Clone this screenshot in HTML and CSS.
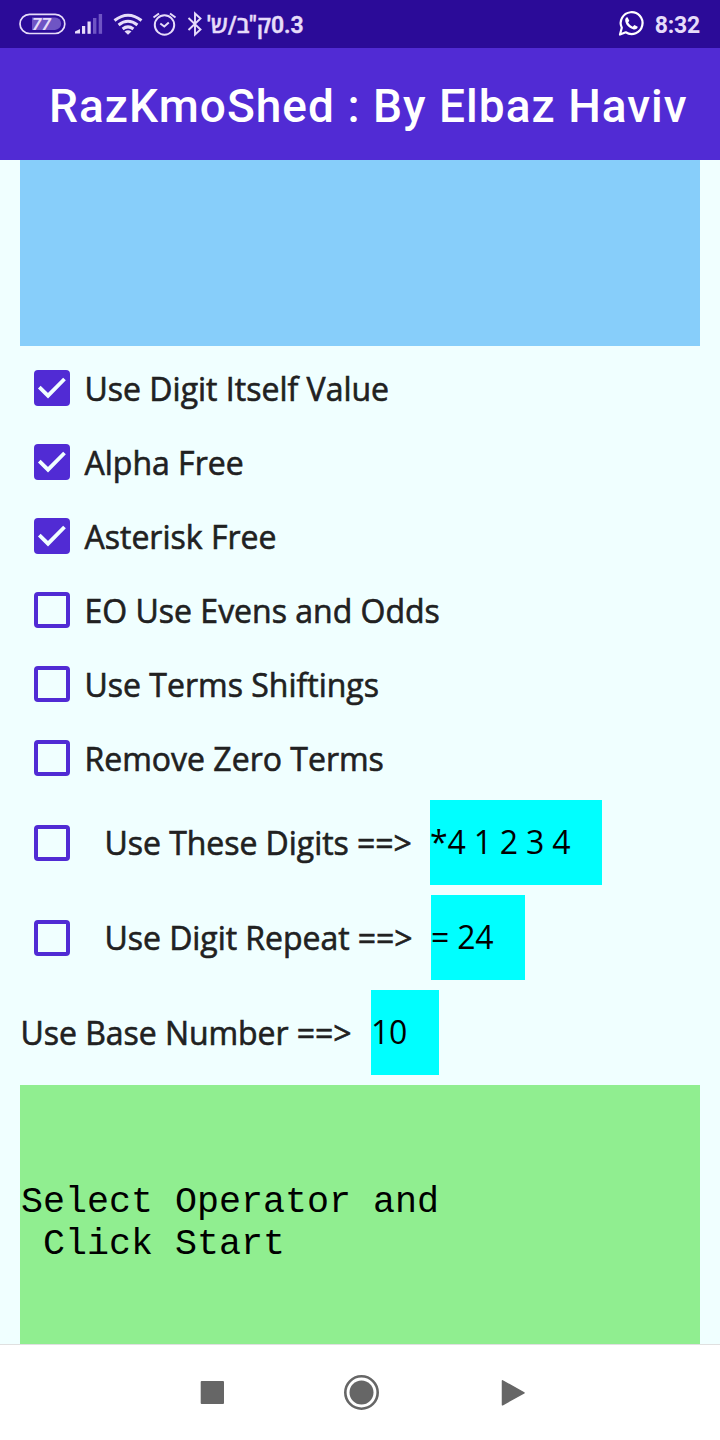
FILE: index.html
```html
<!DOCTYPE html>
<html lang="en">
<head>
<meta charset="utf-8">
<title>RazKmoShed</title>
<link rel="stylesheet" href="styles.css">
</head>
<body>
<div class="screen">
  <div class="status">
    <svg class="status-icons" width="207" height="48" viewBox="0 0 207 48" fill="none">
      <rect x="20" y="14.300" width="44.800" height="19.200" rx="9.600" stroke="#e6dcf9" stroke-width="1.700"/>
      <path d="M32 17.500h23a6.200 6.200 0 0 1 0 12.400H32z" fill="#6f55c4"/>
      <text class="battery" x="32" y="30">77</text>
      <g fill="#e6dcf9">
        <path d="M75 33.500v-2l5-2.500v4.500z"/>
        <rect x="82" y="26" width="3.200" height="7.800"/>
        <rect x="87.500" y="21.500" width="3.200" height="12.300"/>
      </g>
      <g fill="#6f55c4"><rect x="93" y="18" width="3.400" height="15.800"/><rect x="98.700" y="14" width="3.400" height="19.800"/></g>
      <g stroke="#e6dcf9" stroke-width="3">
        <path d="M114.500 20.500q13.500-10.500 27 0"/>
        <path d="M118.600 25q9.400-7.500 18.800 0"/>
        <path d="M122.600 29q5.400-4.200 10.800 0"/>
      </g>
      <path d="M124.500 31.500q3.500-2.300 7 0l-3.500 3.300z" fill="#e6dcf9"/>
      <g stroke="#e6dcf9" stroke-width="2">
        <circle cx="164.500" cy="25" r="9.700"/>
        <path d="M160.300 23.500l4 3 4.500-4M153.500 17.500l5.500-4M170 13.500l5.500 4"/>
        <path d="M188.500 18l12 11.500-5.500 5V13.500l5.500 5-12 11.500" stroke-width="1.900"/>
      </g>
    </svg>
    <span class="speed" dir="rtl">0.3ק"ב/ש'</span>
    <span class="status-right">
      <svg width="28" height="30" viewBox="0 0 28 30" fill="none">
        <path d="M4.800 18.800A10.900 10.900 0 1 1 8.800 23.300L3 25.500z" stroke="#fff" stroke-width="2.200" stroke-linejoin="round"/>
        <path d="M8.200 10.500q.8-2.700 2.500-2l1.600 3.200-1.200 1.800q1.700 3 4.600 4.200l1.700-1.700 3.300 1.700c0 2-2.200 3-4 2.700-4.700-1-8.800-5.300-8.500-9.900z" fill="#fff"/>
      </svg>
      <span class="clock">8:32</span>
    </span>
  </div>
  <header class="title-bar"><h1 class="title">RazKmoShed : By Elbaz Haviv</h1></header>
  <main class="content">
    <div class="panel-blue"></div>
    <div class="options">
      <div class="option"><span class="box checked"><svg width="36" height="36" viewBox="0 0 36 36"><path class="tick" d="M5.300 17.200l8.700 8.500L30.500 9"/></svg></span><span class="label">Use Digit Itself Value</span></div>
      <div class="option"><span class="box checked"><svg width="36" height="36" viewBox="0 0 36 36"><path class="tick" d="M5.300 17.200l8.700 8.500L30.500 9"/></svg></span><span class="label">Alpha Free</span></div>
      <div class="option"><span class="box checked"><svg width="36" height="36" viewBox="0 0 36 36"><path class="tick" d="M5.300 17.200l8.700 8.500L30.500 9"/></svg></span><span class="label">Asterisk Free</span></div>
      <div class="option"><span class="box"></span><span class="label">EO Use Evens and Odds</span></div>
      <div class="option"><span class="box"></span><span class="label">Use Terms Shiftings</span></div>
      <div class="option"><span class="box"></span><span class="label">Remove Zero Terms</span></div>
    </div>
    <div class="fields">
      <div class="field"><span class="box"></span><span class="label field-label">Use These Digits ==&gt;</span><span class="entry digits">*4 1 2 3 4</span></div>
      <div class="field"><span class="box"></span><span class="label field-label repeat-label">Use Digit Repeat ==&gt;</span><span class="entry repeat">= 24</span></div>
      <div class="field base"><span class="label base-label">Use Base Number ==&gt;</span><span class="entry number">10</span></div>
    </div>
    <div class="panel-green"><pre class="message">Select Operator and
 Click Start</pre></div>
  </main>
  <nav class="nav">
    <svg width="720" height="95" viewBox="0 0 720 95" fill="#666">
      <rect x="200.700" y="36" width="23.300" height="23" rx="1"/>
      <circle cx="361.500" cy="47.500" r="12"/>
      <circle cx="361.500" cy="47.500" r="16.200" fill="none" stroke="#666" stroke-width="2.600"/>
      <path d="M502.500 35.800l21.500 12-21.500 12z" stroke="#666" stroke-width="1.500" stroke-linejoin="round"/>
    </svg>
  </nav>
</div>
</body>
</html>
```
FILE: styles.css
```css
body { margin: 0; }
.screen {
  width: 720px;
  height: 1440px;
  display: flex;
  flex-direction: column;
  overflow: hidden;
  background: #f0ffff;
  font-family: "Open Sans", sans-serif;
}
.status {
  height: 48px;
  flex: none;
  display: flex;
  align-items: center;
  background: #2b0b98;
  color: #e6dcf9;
  font-family: Roboto, "Open Sans", sans-serif;
}
.status-icons { flex: none; }
.battery { font: italic 700 17px Roboto, sans-serif; fill: #e6dcf9; }
.speed { font-size: 23px; font-weight: 600; line-height: 44px; padding-top: 4px; white-space: nowrap; -webkit-text-stroke: .4px #e6dcf9; }
.status-right { margin-left: auto; padding-right: 20px; display: flex; align-items: center; gap: 10px; }
.clock { font-size: 23px; font-weight: 700; padding-top: 2px; letter-spacing: -.2px; }
.title-bar {
  height: 112px;
  flex: none;
  display: flex;
  align-items: center;
  padding: 4px 0 0 49px;
  box-sizing: border-box;
  background: #512bd4;
}
.title {
  margin: 0;
  color: #fff;
  font: 500 46px Roboto, sans-serif;
  letter-spacing: 1.020px;
  white-space: nowrap;
}
.content { flex: 1; min-height: 0; padding: 0 20px; display: flex; flex-direction: column; }
.panel-blue { height: 186px; flex: none; background: #87cefa; }
.options { padding: 5px 0 5px 14px; }
.option { height: 74px; display: flex; align-items: center; gap: 14.500px; }
.box {
  width: 36px;
  height: 36px;
  flex: none;
  box-sizing: border-box;
  border: 4px solid #512bd4;
  border-radius: 4px;
}
.checked { border: 0; background: #512bd4; }
.checked svg { display: block; }
.tick { fill: none; stroke: #f0ffff; stroke-width: 3.800; }
.label {
  font-size: 32px;
  line-height: 44px;
  color: #212121;
  white-space: pre;
  padding-top: 2px;
  -webkit-text-stroke: .6px #212121;
}
.fields { display: flex; flex-direction: column; gap: 10px; padding-bottom: 10px; }
.field { height: 85px; display: flex; align-items: center; padding-left: 14px; }
.field .label { padding-top: 0; letter-spacing: -.05px; }
.field-label { width: 325.500px; margin-left: 34.500px; }
.repeat-label { width: 326.500px; }
.field.base { padding-left: .5px; }
.base-label { width: 350.500px; }
.entry {
  height: 85px;
  line-height: 84px;
  box-sizing: border-box;
  background: #0ff;
  color: #000;
  font-size: 32px;
  letter-spacing: -.2px;
  white-space: pre;
}
.digits { width: 172px; }
.repeat { width: 94px; }
.number { width: 68px; }
.panel-green { flex: 1; display: flex; padding: 96px 0 0 1px; background: #90ee90; }
.message { margin: 0; color: #000; font: 36.670px/42px "Liberation Mono", monospace; }
.nav { height: 95px; flex: none; background: #fff; border-top: 1px solid #e0e0e0; }
.nav svg { display: block; }
```
